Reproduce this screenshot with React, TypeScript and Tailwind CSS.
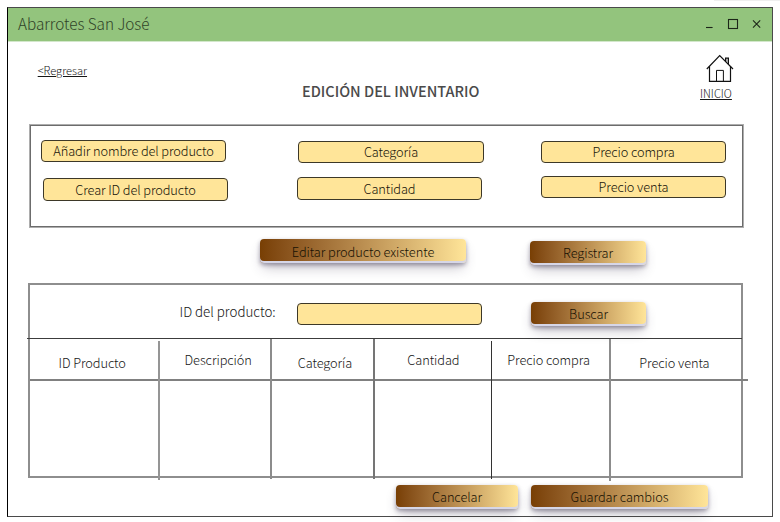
import type { ReactNode } from "react";
import clsx from "clsx";

function Field({ className, children }: { className: string; children?: ReactNode }) {
  return (
    <div
      className={clsx(
        "flex shrink-0 items-center justify-center whitespace-nowrap rounded-[4px] border border-[#3d3828] bg-[#ffe599] text-[12.8px] font-light leading-[20px] tracking-[-0.11px] text-[#17140a]",
        className,
      )}
    >
      {children}
    </div>
  );
}

function GradientButton({ className, children }: { className: string; children: ReactNode }) {
  return (
    <button
      className={clsx(
        "h-[24px] shrink-0 whitespace-nowrap rounded-[4px] bg-linear-to-r from-[#783f04] to-[#ffe599] text-center text-[12.8px] font-light leading-[16px] tracking-[-0.08px] text-[#181204] shadow-[0_2px_4px_rgba(45,35,66,0.4),0_7px_13px_-3px_rgba(45,35,66,0.3),inset_0_-2px_0_#d6d6e7]",
        className,
      )}
    >
      {children}
    </button>
  );
}

function HouseIcon() {
  return (
    <svg width="28" height="28" viewBox="0 0 28 28" fill="none" stroke="#111" strokeWidth="1.2">
      <path d="M0.8 15 L13.7 1.6 L27 15" />
      <path d="M3.5 12.5 V27.4 H24.5 V12.5" />
      <path d="M10.5 27 V16.4 H17.4 V27" strokeWidth="1" />
      <path d="M19.6 7 V4.2 H22.4 V10" />
      <path d="M21 4.5 V8" strokeWidth="1" strokeOpacity="0.4" />
    </svg>
  );
}

const columns = [
  { label: "ID Producto", column: "mt-[2px] h-[139px] w-[130px] border-r-2 border-[#959595]", cell: "h-[40px] pl-[28.5px] pt-[14px]" },
  { label: "Descripción", column: "h-[140px] w-[112px] border-r-2 border-[#8c8c8c]", cell: "h-[42px] pl-[24.6px] pt-[13px]" },
  { label: "Categoría", column: "h-[140px] w-[103px] border-r-2 border-[#757575]", cell: "h-[42px] pl-[25.7px] pt-[16px]" },
  { label: "Cantidad", column: "mt-[2px] h-[138px] w-[117px] border-r border-[#333]", cell: "h-[40px] pl-[32.3px] pt-[11px]" },
  { label: "Precio compra", column: "h-[142px] w-[119px] border-r-2 border-[#8c8c8c]", cell: "h-[42px] pl-[15.3px] pt-[13px]" },
  { label: "Precio venta", column: "h-[137px] w-[130px]", cell: "mr-[-7px] h-[42px] pl-[28.3px] pt-[16px]" },
];

export default function App() {
  return (
    <div className="h-[522px] w-[780px] overflow-hidden bg-white font-['Noto_Sans_CJK_SC','Noto_Sans',sans-serif] font-light text-[#161616]">
      <div className="ml-auto h-px w-[66px] bg-[#efefef]" />
      <div className="ml-[7px] mt-[6px] h-[510px] w-[766px] border border-[#4a4a4a] border-l-black bg-white">
        <header className="flex h-[34px] items-start justify-between border-b border-[#d3e7cb] bg-[#93c47d]">
          <h1 className="pl-[10px] pt-[5px] text-[15.3px] font-light leading-[20px] text-[#2f4227]">Abarrotes San José</h1>
          <div className="flex pr-[11px] pt-[10px]">
            <svg width="55" height="12" viewBox="0 0 55 12" fill="none" stroke="#1c2618" strokeWidth="1.1">
              <path d="M0 9.5 H6.6" />
              <rect x="22.5" y="1.5" width="9" height="9" />
              <path d="M47 2.4 L54.2 9.6 M54.2 2.4 L47 9.6" />
            </svg>
          </div>
        </header>

        <section className="flex h-[82px] items-start">
          <a className="w-[294px] pl-[29.7px] pt-[20px] text-[11.1px] leading-[16px] underline decoration-1 underline-offset-[1px]">&lt;Regresar</a>
          <h2 className="w-[398px] pt-[39px] text-[14.5px] font-medium leading-[20px] text-[#4a4a4a]">EDICIÓN DEL INVENTARIO</h2>
          <div className="flex flex-col pt-[12px]">
            <div className="pl-[6px]">
              <HouseIcon />
            </div>
            <a className="pt-[3px] text-[11.1px] leading-[16px] underline decoration-1 underline-offset-[1px]">INICIO</a>
          </div>
        </section>

        <section className="ml-[21px] flex h-[104px] w-[715px] items-start border border-[#adadad] pl-[11px] pt-px shadow-[inset_0_0_0_1px_#6c6c6c]">
          <div className="flex w-[256px] flex-col pt-[14px]">
            <Field className="h-[22px] w-[185px]">Añadir nombre del producto</Field>
            <Field className="ml-[2px] mt-[16px] h-[23px] w-[185px]">Crear ID del producto</Field>
          </div>
          <div className="flex w-[244px] flex-col pt-[15px]">
            <Field className="ml-px h-[22px] w-[186px]">Categoría</Field>
            <Field className="mt-[14px] h-[23px] w-[185px]">Cantidad</Field>
          </div>
          <div className="flex flex-col pt-[15px]">
            <Field className="h-[22px] w-[185px]">Precio compra</Field>
            <Field className="mt-[13px] h-[22px] w-[185px]">Precio venta</Field>
          </div>
        </section>

        <section className="flex h-[55px] items-start pl-[252px] pt-[11px]">
          <GradientButton className="w-[206px] pt-px">Editar producto existente</GradientButton>
          <GradientButton className="ml-[64px] mt-[2px] w-[116px]">Registrar</GradientButton>
        </section>

        <section className="ml-[20px] h-[195px] w-[715px] border-2 border-[#8e8e8e]">
          <div className="flex h-[53px] items-start">
            <label className="w-[267px] pl-[149.5px] pt-[19px] text-[13.35px] leading-[16px]">ID del producto:</label>
            <Field className="mt-[18px] h-[22px] w-[185px]" />
            <GradientButton className="ml-[49px] mt-[17px] w-[115px]">Buscar</GradientButton>
          </div>
          <div className="ml-[-3px] mr-[-1px] h-px bg-[#3c3c3c]" />
          <div className="flex h-[137px] items-start">
            {columns.map((c) => (
              <div key={c.label} className={clsx("shrink-0", c.column)}>
                <div className={clsx("whitespace-nowrap border-b-2 border-[#808080] text-[12.8px] leading-[16px] tracking-[-0.08px]", c.cell)}>
                  {c.label}
                </div>
              </div>
            ))}
          </div>
        </section>

        <section className="flex items-start pl-[388px] pt-[7px]">
          <GradientButton className="w-[122px]">Cancelar</GradientButton>
          <GradientButton className="ml-[13px] w-[177px]">Guardar cambios</GradientButton>
        </section>
      </div>
    </div>
  );
}
